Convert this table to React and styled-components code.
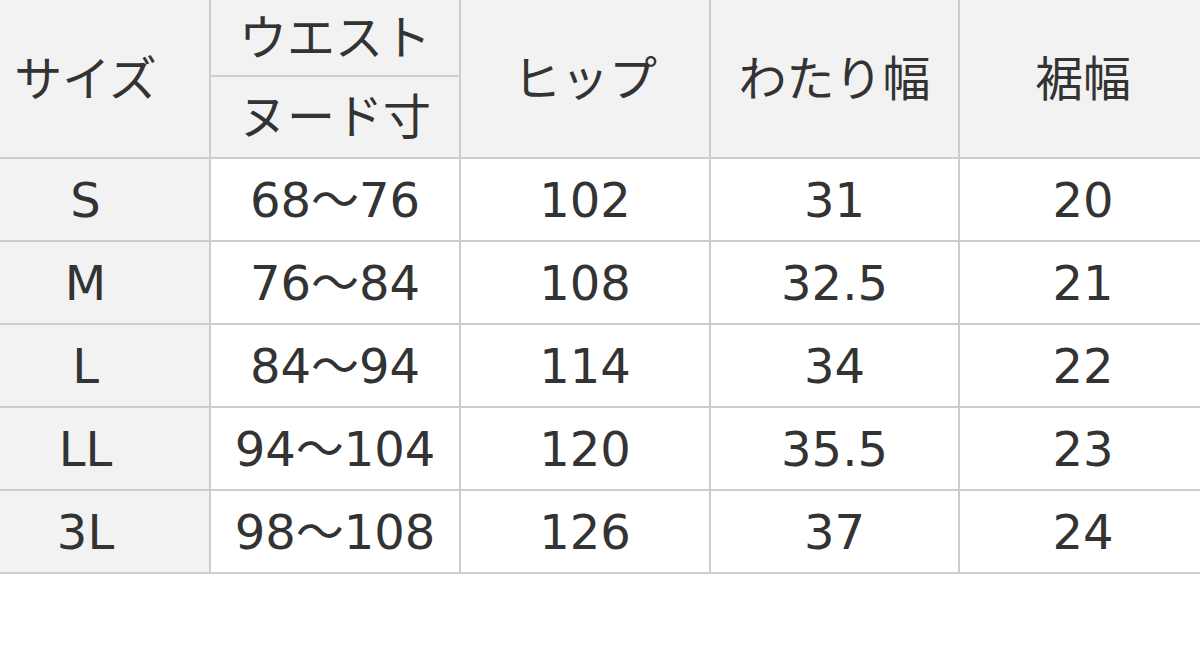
import styled, { createGlobalStyle } from "styled-components";

const GlobalStyle = createGlobalStyle`
  html, body {
    margin: 0;
    padding: 0;
    background: #fff;
    overflow: hidden;
  }
  body {
    font-family: "DejaVu Sans", "Noto Sans CJK JP", sans-serif;
    color: #333;
  }
`;

const rows = [
  ["S", "68〜76", "102", "31", "20"],
  ["M", "76〜84", "108", "32.5", "21"],
  ["L", "84〜94", "114", "34", "22"],
  ["LL", "94〜104", "120", "35.5", "23"],
  ["3L", "98〜108", "126", "37", "24"],
];

function App() {
  return (
    <>
      <GlobalStyle />
      <Page>
        <SizeTable>
          <Cell $head $span>サイズ</Cell>
          <Cell $head>ウエスト</Cell>
          <Cell $head $span>ヒップ</Cell>
          <Cell $head $span>わたり幅</Cell>
          <Cell $head $span>裾幅</Cell>
          <Cell $head>ヌード寸</Cell>
          {rows.map((row) =>
            row.map((v, i) => (
              <Cell key={row[0] + i} $head={i === 0}>
                {v}
              </Cell>
            ))
          )}
        </SizeTable>
      </Page>
    </>
  );
}

export default App;

const Page = styled.div`
  width: 1200px;
  height: 653px;
  overflow: hidden;
  background: #fff;
`;

// 表は左右が少し画面外にはみ出している
const SizeTable = styled.div`
  display: grid;
  margin-left: -38px;
  width: 1244px;
  grid-template-columns: 247px 248px 248px 247px 246px;
  grid-template-rows: 75px 80px repeat(5, 81px);
  gap: 2px;
  padding-bottom: 2px;
  background: #cdcdcd;
`;

const Cell = styled.div`
  display: flex;
  align-items: center;
  justify-content: center;
  background: ${(p) => (p.$head ? "#f2f2f2" : "#fff")};
  font-size: 48px;
  line-height: 1;
  grid-row: ${(p) => (p.$span ? "span 2" : "auto")};
`;
